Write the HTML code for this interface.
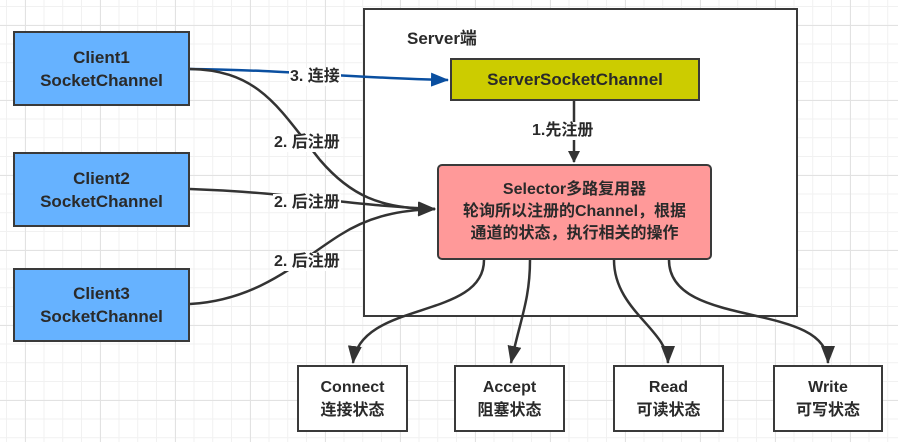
<!DOCTYPE html>
<html><head><meta charset="utf-8"><style>
html,body{margin:0;padding:0;}
body{width:898px;height:442px;position:relative;overflow:hidden;background:#fff;
font-family:"Liberation Sans","Noto Sans CJK SC",sans-serif;font-weight:bold;color:#2a2a2a;
background-image:linear-gradient(#e2e2e2 1px,transparent 1px),linear-gradient(90deg,#e2e2e2 1px,transparent 1px),linear-gradient(#f1f1f1 1px,transparent 1px),linear-gradient(90deg,#f1f1f1 1px,transparent 1px);
background-size:75px 75px,75px 75px,18.75px 18.75px,18.75px 18.75px;background-position:25px 25px,25px 25px,6px 6px,6px 6px;}
.b{position:absolute;box-sizing:border-box;border:2px solid #3a3a3a;display:flex;align-items:center;justify-content:center;text-align:center;font-size:17px;line-height:23px;}
.c{background:#66b2ff;}
.l{position:absolute;font-size:16px;background:#fff;padding:0 1px;line-height:18px;}
svg{position:absolute;left:0;top:0;}
</style></head><body>
<div class="b" style="left:363px;top:8px;width:435px;height:309px;background:#fff;"></div>
<div style="position:absolute;left:407px;top:24px;font-size:17px;">Server端</div>
<div class="b c" style="left:13px;top:31px;width:177px;height:75px;">Client1<br>SocketChannel</div>
<div class="b c" style="left:13px;top:152px;width:177px;height:75px;">Client2<br>SocketChannel</div>
<div class="b c" style="left:13px;top:268px;width:177px;height:74px;">Client3<br>SocketChannel</div>
<div class="b" style="left:450px;top:58px;width:250px;height:43px;background:#cccc00;">ServerSocketChannel</div>
<div class="b" style="left:437px;top:164px;width:275px;height:96px;background:#ff9999;border-radius:5px;font-size:16px;line-height:22px;">Selector多路复用器<br>轮询所以注册的Channel，根据<br>通道的状态，执行相关的操作</div>
<div class="b" style="left:297px;top:365px;width:111px;height:67px;background:#fff;font-size:16px;">Connect<br>连接状态</div>
<div class="b" style="left:454px;top:365px;width:111px;height:67px;background:#fff;font-size:16px;">Accept<br>阻塞状态</div>
<div class="b" style="left:613px;top:365px;width:111px;height:67px;background:#fff;font-size:16px;">Read<br>可读状态</div>
<div class="b" style="left:773px;top:365px;width:110px;height:67px;background:#fff;font-size:16px;">Write<br>可写状态</div>
<svg width="898" height="442">
<defs>
<marker id="a" markerWidth="12" markerHeight="12" refX="11" refY="6" orient="auto" markerUnits="userSpaceOnUse"><path d="M0,0 L12,6 L0,12 Z" fill="#333"/></marker>
<marker id="a2" markerWidth="18" markerHeight="14" refX="17" refY="7" orient="auto" markerUnits="userSpaceOnUse"><path d="M0,0 L18,7 L0,14 Z" fill="#333"/></marker>
<marker id="ab" markerWidth="18" markerHeight="14" refX="17" refY="7" orient="auto" markerUnits="userSpaceOnUse"><path d="M0,0 L18,7 L0,14 Z" fill="#0a4fa0"/></marker>
</defs>
<g fill="none" stroke-width="2.5">
<path d="M190,69 C290,70 350,78 448,80" stroke="#0a4fa0" marker-end="url(#ab)"/>
<path d="M190,69 C260,70 280,110 320,160 C350,195 380,209 435,209" stroke="#333" marker-end="url(#a2)"/>
<path d="M190,189 C300,193 340,205 435,209" stroke="#333" marker-end="url(#a2)"/>
<path d="M190,304 C260,300 300,260 340,235 C370,216 400,210 435,209" stroke="#333" marker-end="url(#a2)"/>
<path d="M574,101 L574,162" stroke="#333" marker-end="url(#a)"/>
<path d="M484,260 C484,320 360,300 353,363" stroke="#333" marker-end="url(#a2)"/>
<path d="M530,260 C530,300 520,320 511,363" stroke="#333" marker-end="url(#a2)"/>
<path d="M614,260 C614,310 668,330 668,363" stroke="#333" marker-end="url(#a2)"/>
<path d="M669,260 C669,330 828,300 828,363" stroke="#333" marker-end="url(#a2)"/>
</g>
</svg>
<div class="l" style="left:289px;top:68px;">3. 连接</div>
<div class="l" style="left:273px;top:134px;">2. 后注册</div>
<div class="l" style="left:273px;top:194px;">2. 后注册</div>
<div class="l" style="left:273px;top:253px;">2. 后注册</div>
<div class="l" style="left:531px;top:122px;">1.先注册</div>
</body></html>
